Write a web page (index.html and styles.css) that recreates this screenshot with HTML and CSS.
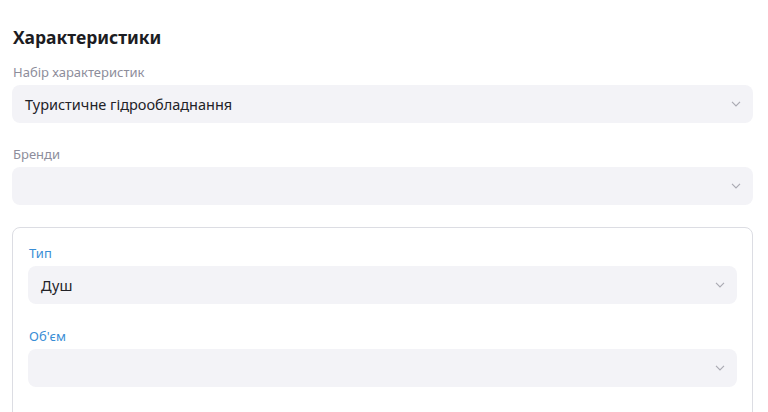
FILE: index.html
```html
<!DOCTYPE html>
<html>
    <head>
        <link rel="stylesheet" href="styles.css">
    </head>
    <body>
        <div id="specs">
            <h2 class="title">Характеристики</h2>

            <div class="field">
                <div class="label">Набір характеристик</div>
                <div class="select">
                    <span class="value">Туристичне гідрообладнання</span>
                    <svg class="chevron" width="10" height="6" viewBox="0 0 10 6"><path d="M1 0.8 L5 5 L9 0.8" fill="none" stroke="#a9a9b2" stroke-width="1.1"/></svg>
                </div>
            </div>

            <div class="field">
                <div class="label">Бренди</div>
                <div class="select">
                    <span class="value"></span>
                    <svg class="chevron" width="10" height="6" viewBox="0 0 10 6"><path d="M1 0.8 L5 5 L9 0.8" fill="none" stroke="#a9a9b2" stroke-width="1.1"/></svg>
                </div>
            </div>

            <div class="card">
                <div class="field">
                    <div class="label blue">Тип</div>
                    <div class="select">
                        <span class="value">Душ</span>
                        <svg class="chevron" width="10" height="6" viewBox="0 0 10 6"><path d="M1 0.8 L5 5 L9 0.8" fill="none" stroke="#a9a9b2" stroke-width="1.1"/></svg>
                    </div>
                </div>
                <div class="field">
                    <div class="label blue">Об'єм</div>
                    <div class="select">
                        <span class="value"></span>
                        <svg class="chevron" width="10" height="6" viewBox="0 0 10 6"><path d="M1 0.8 L5 5 L9 0.8" fill="none" stroke="#a9a9b2" stroke-width="1.1"/></svg>
                    </div>
                </div>
            </div>
        </div>
    </body>
</html>
```

FILE: styles.css
```css
body{
    margin:0px;
    padding:0px;
    background:white;
    font-family:"Noto Sans", "Open Sans", sans-serif;
    color:#222228;
}

#specs{
    padding:25px 15px 0px 12px;
    display:flex;
    flex-direction:column;
    gap:22px;
}

.title{
    margin:0px 0px -8px 1px;
    font-size:17.5px;
    line-height:24px;
    font-weight:700;
    color:#1c1c22;
}

.field{
    display:flex;
    flex-direction:column;
    gap:4px;
}

.label{
    font-size:13px;
    line-height:18px;
    color:#8d8d9b;
    padding-left:1px;
}

.label.blue{
    color:#3a8ed6;
}

.select{
    height:38px;
    border-radius:8px;
    background:#f3f3f7;
    display:flex;
    align-items:center;
    justify-content:space-between;
    padding:0px 12px 0px 13px;
}

.value{
    font-size:14.5px;
    color:#222228;
}

.chevron{
    display:block;
}

.card{
    border:1px solid #dcdde3;
    border-radius:8px;
    padding:16px 15px 40px 15px;
    display:flex;
    flex-direction:column;
    gap:23px;
}
```
